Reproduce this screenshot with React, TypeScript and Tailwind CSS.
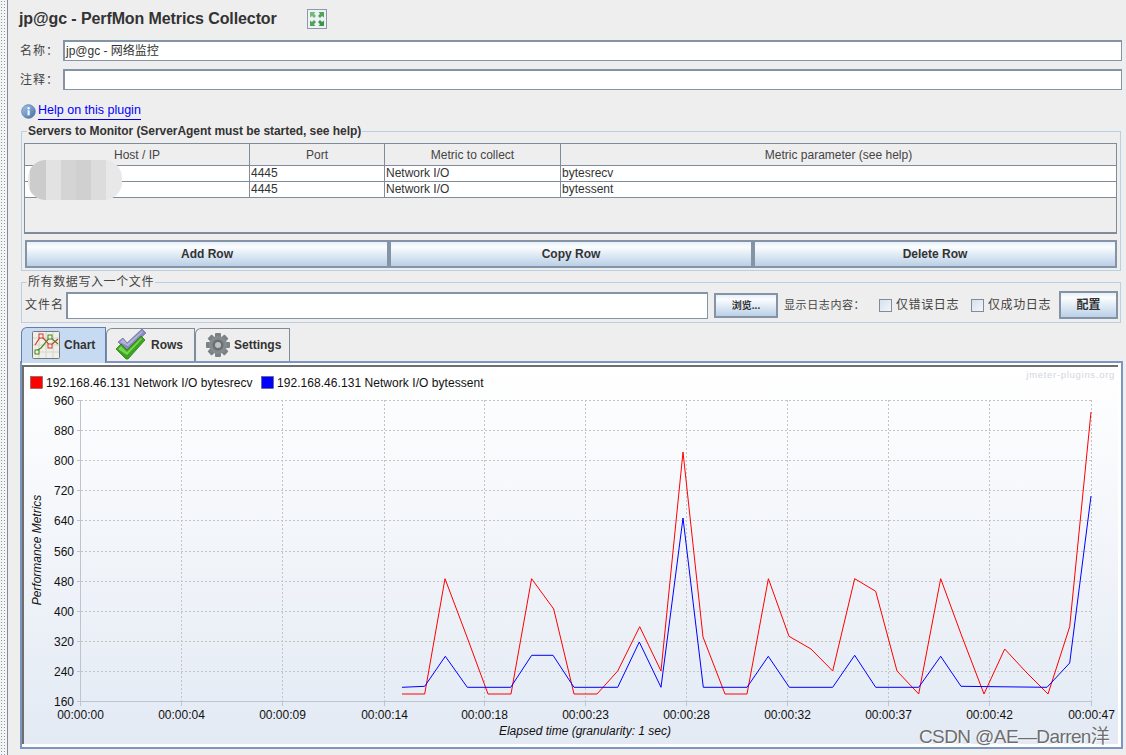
const font = "[font-family:'Liberation_Sans','Noto_Sans_CJK_SC',sans-serif]";

const RED: [number, number][] = [
  [402, 694], [424.7, 694], [445, 578.7], [467, 637], [488, 694], [511, 694], [531.6, 578.7], [553.7, 609],
  [574, 694], [597, 694], [617.7, 671], [639.7, 626.7], [661, 671], [683, 452], [703, 637], [725, 694],
  [747, 694], [768.4, 578.7], [789, 636.3], [811, 649], [832.7, 671], [854.7, 578.7], [875.7, 591.3], [897, 671],
  [918.7, 694], [940.7, 578.7], [961, 634], [984, 694], [1004.7, 649], [1026, 672], [1048, 694], [1069.7, 626.7],
  [1091, 412],
];

const BLUE: [number, number][] = [
  [402, 687.3], [424.7, 686.3], [445.3, 656.3], [467.3, 687.3], [510.7, 687.3], [531.7, 655.3], [553, 655.3],
  [574, 687.3], [617.7, 687.3], [639.3, 642], [661, 687.3], [683, 518], [703.3, 687.3], [747, 687.3], [768.3, 656.3],
  [789.3, 687.3], [832.7, 687.3], [854.7, 655.3], [875.7, 687.3], [918.7, 687.3], [940.7, 656.3], [961, 686.3],
  [1047, 687.3], [1069.7, 663], [1091, 496],
];

const YTICKS = [960, 880, 800, 720, 640, 560, 480, 400, 320, 240, 160];
const XTICKS: [number, string][] = [
  [80.5, "00:00:00"], [181.5, "00:00:04"], [282.5, "00:00:09"], [384.5, "00:00:14"], [484.5, "00:00:18"],
  [585.5, "00:00:23"], [686.5, "00:00:28"], [787.5, "00:00:32"], [888.5, "00:00:37"], [989.5, "00:00:42"],
  [1091.5, "00:00:47"],
];

const pts = (p: [number, number][]) => p.map(([x, y]) => `${x},${y}`).join(" ");

function Button({ label, className }: { label: string; className: string }) {
  return (
    <div
      className={`flex items-center justify-center border-2 border-[#8494a6] bg-gradient-to-b from-[#e6eff8] via-[#fbfdfe] via-20% to-[#bad0e7] text-[12px] font-bold text-[#333333] ${className}`}
    >
      {label}
    </div>
  );
}

function Checkbox({ label }: { label: string }) {
  return (
    <div className="flex items-center gap-[4px]">
      <div className="h-[13px] w-[13px] border border-[#7e8c9c] bg-gradient-to-br from-[#d5e1ee] to-[#f3f6fa]" />
      <span className="text-[12px] tracking-[0.6px] text-[#444444]">{label}</span>
    </div>
  );
}

function ChartIcon() {
  return (
    <svg width="28" height="28" viewBox="0 0 28 28">
      <rect x="0.5" y="0.5" width="27" height="27" rx="1" fill="#f0efe9" stroke="#77787c" />
      <path d="M7 1v26M14 1v26M21 1v26M1 7h26M1 14h26M1 21h26" stroke="#d4d4ce" strokeWidth="1" />
      <polyline points="3,14 9,5 14,10 18,15 26,8" fill="none" stroke="#d63a2c" strokeWidth="1.2" />
      <polyline points="4,20 9,17 18,6 26,13" fill="none" stroke="#3f8a1c" strokeWidth="1.2" />
      <rect x="7" y="3" width="4" height="4" fill="#f4f0e8" stroke="#d63a2c" />
      <rect x="16" y="13" width="4" height="4" fill="#f4f0e8" stroke="#d63a2c" />
      <rect x="16" y="4" width="4" height="4" fill="#f4f0e8" stroke="#3f8a1c" />
      <rect x="3" y="19" width="4" height="4" fill="#f4f0e8" stroke="#3f8a1c" />
    </svg>
  );
}

function RowsIcon() {
  return (
    <svg width="32" height="32" viewBox="0 0 32 32">
      <path d="M2 13l5-4 4 5L26 0l4 4-18 17-3-1z" fill="#8a8ac0" stroke="#6c6ca0" strokeWidth="0.7" />
      <path d="M4 13l3-3 4 5L26 2l1 1-15 14z" fill="#b4b4dc" />
      <path d="M0 20l5-5 6 6L25 7l4 4-17 19h-2z" fill="#3aa61e" stroke="#2a7a12" strokeWidth="0.8" />
      <path d="M2 20l3-3 6 6L25 9l1 1-15 16z" fill="#7cd456" />
    </svg>
  );
}

function GearIcon() {
  const teeth = [0, 45, 90, 135];
  return (
    <svg width="24" height="24" viewBox="0 0 24 24">
      {teeth.map((a) => (
        <rect key={a} x="9" y="0" width="6" height="24" rx="1" fill="#7b8285" transform={`rotate(${a} 12 12)`} />
      ))}
      <circle cx="12" cy="12" r="9" fill="#858b8d" />
      <circle cx="12" cy="12" r="5.5" fill="#6a6f72" />
      <circle cx="12" cy="12" r="3" fill="#bfc2c2" />
    </svg>
  );
}

function ExpandIcon() {
  return (
    <svg width="20" height="20" viewBox="0 0 20 20">
      <rect x="0.5" y="0.5" width="19" height="19" fill="#eef2f4" stroke="#8a9aaa" />
      <path d="M3 3h5.5L7 4.8 9 7 7 9 5 7 3 8.6z" fill="#76b87a" />
      <path d="M17 3h-5.5L13 4.8 11 7l2 2 2-2 2 1.6z" fill="#4fa35a" />
      <path d="M3 17h5.5L7 15.2 9 13l-2-2-2 2-2-1.6z" fill="#4fa35a" />
      <path d="M17 17h-5.5l1.5-1.8L11 13l2-2 2 2 2-1.6z" fill="#3f944c" />
    </svg>
  );
}

function InfoIcon() {
  return (
    <svg width="15" height="15" viewBox="0 0 15 15">
      <defs>
        <linearGradient id="info" x1="0" y1="0" x2="1" y2="1">
          <stop offset="0" stopColor="#a8c6ea" />
          <stop offset="1" stopColor="#3f6ea8" />
        </linearGradient>
      </defs>
      <circle cx="7.5" cy="7.5" r="6.8" fill="url(#info)" stroke="#5b7a9e" strokeWidth="0.8" />
      <rect x="6.5" y="6.2" width="2.2" height="5.2" fill="#f4f7fb" />
      <circle cx="7.6" cy="4.2" r="1.2" fill="#f4f7fb" />
    </svg>
  );
}

function Chart() {
  return (
    <svg width="1094" height="377" viewBox="24 367 1094 377" className="block">
      <defs>
        <linearGradient id="chartBg" x1="0" y1="0" x2="0" y2="1">
          <stop offset="0" stopColor="#ffffff" />
          <stop offset="1" stopColor="#e3eaf4" />
        </linearGradient>
      </defs>
      <rect x="24" y="367" width="1094" height="377" fill="url(#chartBg)" />
      <text x="1115" y="378" textAnchor="end" fontSize="9.5" letterSpacing="0.7" fill="#d2d6dc" fontFamily="Liberation Sans">
        jmeter-plugins.org
      </text>

      <rect x="30.5" y="376.5" width="12" height="12" fill="#ff0000" stroke="#555" strokeWidth="0.5" />
      <text x="46" y="387" fontSize="12" letterSpacing="0.05" fill="#111" fontFamily="Liberation Sans">
        192.168.46.131 Network I/O bytesrecv
      </text>
      <rect x="261.5" y="376.5" width="12" height="12" fill="#0000ff" stroke="#555" strokeWidth="0.5" />
      <text x="277" y="387" fontSize="12" letterSpacing="0.05" fill="#111" fontFamily="Liberation Sans">
        192.168.46.131 Network I/O bytessent
      </text>

      {YTICKS.map((v, i) => {
        const y = Math.round(400 + i * 30.1) + 0.5;
        return (
          <g key={v}>
            {i < 10 && <line x1="81" x2="1091" y1={y} y2={y} stroke="#c4c4c4" strokeDasharray="2 2" />}
            <line x1="77" x2="81" y1={y} y2={y} stroke="#bcc4ce" />
            <text x="74" y={y + 4} textAnchor="end" fontSize="12" fill="#111" fontFamily="Liberation Sans">
              {v}
            </text>
          </g>
        );
      })}
      <line x1="80.5" x2="80.5" y1="400" y2="706" stroke="#bcc4ce" />
      <line x1="80" x2="1092" y1="701.5" y2="701.5" stroke="#bcc4ce" />
      {XTICKS.map(([x, label]) => (
        <g key={label}>
          {x > 81 && <line x1={x} x2={x} y1="400" y2="701" stroke="#c4c4c4" strokeDasharray="2 2" />}
          <line x1={x} x2={x} y1="701" y2="706" stroke="#bcc4ce" />
          <text x={x} y="719" textAnchor="middle" fontSize="12" fill="#111" fontFamily="Liberation Sans">
            {label}
          </text>
        </g>
      ))}
      <text x="585" y="735" textAnchor="middle" fontSize="12" fontStyle="italic" fill="#111" fontFamily="Liberation Sans">
        Elapsed time (granularity: 1 sec)
      </text>
      <text
        x="41"
        y="550"
        textAnchor="middle"
        fontSize="12"
        fontStyle="italic"
        fill="#111"
        fontFamily="Liberation Sans"
        transform="rotate(-90 41 550)"
      >
        Performance Metrics
      </text>

      <polyline points={pts(RED)} fill="none" stroke="#ff0000" strokeWidth="1" />
      <polyline points={pts(BLUE)} fill="none" stroke="#0000ff" strokeWidth="1" />
    </svg>
  );
}

export default function App() {
  return (
    <div className={`relative flex h-[755px] w-[1126px] overflow-hidden bg-[#eeeeee] ${font}`}>
      <div className="h-full w-[7px] bg-[radial-gradient(#8f9aa6_0.7px,transparent_0.8px)] bg-[length:3px_3px] bg-[#f4f4f4]" />
      <div className="h-full w-[1px] bg-[#7f8b98]" />

      <div className="flex w-[1118px] flex-col">
        {/* title */}
        <div className="flex h-[29px] items-center pt-[9px] pl-[11px]">
          <h1 className="w-[288px] text-[16px] font-bold tracking-[-0.1px] text-[#333333]">jp@gc - PerfMon Metrics Collector</h1>
          <ExpandIcon />
        </div>

        {/* name + comment */}
        <div className="mt-[11px] flex h-[21px] items-center">
          <span className="w-[55px] pl-[12px] text-[12px] tracking-[1px] text-[#444444]">名称：</span>
          <div className="flex h-[21px] w-[1059px] items-center border border-t-2 border-l-2 border-[#8494a6] bg-white pl-[1px] text-[12px] text-[#333333]">
            jp@gc - 网络监控
          </div>
        </div>
        <div className="mt-[8px] flex h-[21px] items-center">
          <span className="w-[55px] pl-[12px] text-[12px] tracking-[1px] text-[#444444]">注释：</span>
          <div className="h-[21px] w-[1059px] border border-t-2 border-l-2 border-[#8494a6] bg-white" />
        </div>

        {/* help link */}
        <div className="mt-[12px] flex h-[18px] items-center pl-[13px]">
          <InfoIcon />
          <span className="ml-[2px] border-b border-[#0000e0] text-[12.5px] leading-[17px] text-[#0000ff]">Help on this plugin</span>
        </div>

        {/* servers */}
        <fieldset className="mt-[5px] ml-[13px] h-[146px] w-[1100px] border border-[#b8cfe6] px-[2px]">
          <legend className="ml-[3px] px-[1px] text-[12px] leading-[12px] font-bold tracking-[-0.05px] text-[#333333]">
            Servers to Monitor (ServerAgent must be started, see help)
          </legend>
          <div className="mt-[6px] h-[91px] w-[1093px] border-t border-r border-b-2 border-l border-[#7e8c9c]">
            <div className="grid h-[22px] grid-cols-[225px_135px_176px_555px] border-b border-[#7e8c9c] text-[12px] text-[#444444]">
              {["Host / IP", "Port", "Metric to collect", "Metric parameter (see help)"].map((h) => (
                <div key={h} className="flex items-center justify-center border-r border-[#7e8c9c] last:border-r-0">
                  {h}
                </div>
              ))}
            </div>
            {["bytesrecv", "bytessent"].map((p) => (
              <div key={p} className="grid h-[16px] grid-cols-[225px_135px_176px_555px] border-b border-[#7e8c9c] bg-white text-[12px] leading-[15px] text-[#333333]">
                <div className="border-r border-[#7e8c9c]" />
                <div className="border-r border-[#7e8c9c] pl-[1px]">4445</div>
                <div className="border-r border-[#7e8c9c] pl-[1px]">Network I/O</div>
                <div className="pl-[1px]">{p}</div>
              </div>
            ))}
          </div>
          <div className="mt-[6px] ml-[1px] flex">
            <Button label="Add Row" className="h-[28px] w-[364px]" />
            <Button label="Copy Row" className="h-[28px] w-[364px]" />
            <Button label="Delete Row" className="h-[28px] w-[364px]" />
          </div>
        </fieldset>

        {/* results file */}
        <fieldset className="mt-[5px] ml-[13px] h-[47px] w-[1100px] border border-[#b8cfe6]">
          <legend className="ml-[5px] px-[1px] text-[12px] leading-[12px] tracking-[0.6px] text-[#444444]">所有数据写入一个文件</legend>
          <div className="mt-[3px] flex h-[28px] items-center pl-[3px]">
            <span className="w-[41px] text-[12px] tracking-[1px] text-[#444444]">文件名</span>
            <div className="h-[27px] w-[642px] border border-t-2 border-l-2 border-[#8494a6] bg-white" />
            <Button label="浏览..." className="ml-[6px] h-[25px] w-[64px] !text-[10px]" />
            <span className="ml-[6px] w-[95px] text-[11px] tracking-[0.6px] text-[#444444]">显示日志内容：</span>
            <div className="flex w-[179px] gap-[12px]">
              <Checkbox label="仅错误日志" />
              <Checkbox label="仅成功日志" />
            </div>
            <Button label="配置" className="ml-[1px] h-[28px] w-[59px]" />
          </div>
        </fieldset>

        {/* tabs */}
        <div className="relative z-10 mt-[4px] ml-[13px] -mb-[2px] flex h-[36px] items-start">
          <div className="flex h-[36px] w-[85px] items-center gap-[4px] rounded-tl-[6px] border border-b-0 border-[#5f7fb5] bg-[#c6dbf1] pb-[2px] pl-[10px] text-[12px] font-bold text-[#333333]">
            <ChartIcon />
            Chart
          </div>
          <div className="mt-[1px] flex h-[33px] w-[89px] items-center gap-[3px] rounded-tl-[6px] border border-b-0 border-[#7e8c9c] pl-[9px] text-[12px] font-bold text-[#333333]">
            <RowsIcon />
            Rows
          </div>
          <div className="mt-[1px] flex h-[33px] w-[95px] items-center gap-[4px] rounded-tl-[6px] border border-b-0 border-[#7e8c9c] pl-[10px] text-[12px] font-bold text-[#333333]">
            <GearIcon />
            Settings
          </div>
        </div>

        {/* chart panel */}
        <div className="ml-[12px] h-[388px] w-[1103px] border-2 border-[#7b96bf] bg-white pt-[2px]">
          <div className="w-[1096px] border-t-2 border-l-2 border-[#6e6e6e]">
            <Chart />
          </div>
        </div>
      </div>

      {/* blurred address */}
      <div className="absolute top-[160px] left-[28px] flex h-[40px] w-[94px] overflow-hidden rounded-[18px] bg-[#e8e8e8]">
        <div className="ml-[2px] h-full w-[16px] bg-[#cccccc]" />
        <div className="h-full w-[15px] bg-[#e2e2e2]" />
        <div className="h-full w-[15px] bg-[#d4d4d4]" />
        <div className="h-full w-[15px] bg-[#d0d0d0]" />
        <div className="h-full w-[15px] bg-[#dcdcdc]" />
      </div>

      {/* watermark */}
      <span className="absolute top-[725px] left-[919px] text-[19px] leading-[24px] tracking-[-0.6px] whitespace-nowrap text-[#6e6e6e] [text-shadow:1px_1px_1px_#ffffff]">
        CSDN @AE—Darren洋
      </span>
    </div>
  );
}
